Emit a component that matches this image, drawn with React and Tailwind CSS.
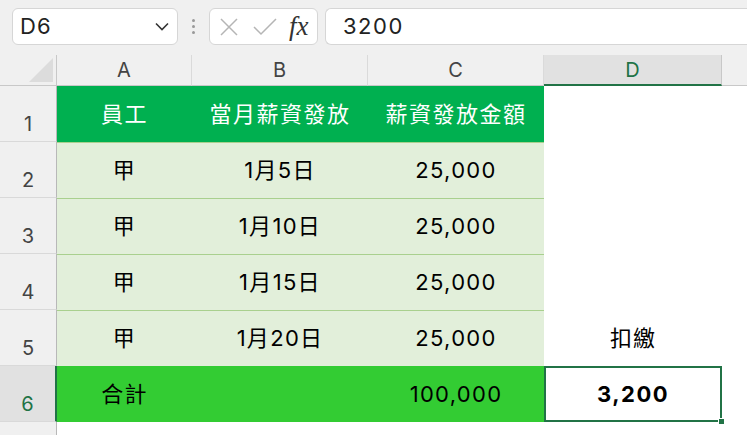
import React from 'react'

const font = { fontFamily: 'Inter, "Noto Sans CJK TC", sans-serif' }

const cols = ['A', 'B', 'C', 'D']

const rows = [
  { n: 1, cells: ['員工', '當月薪資發放', '薪資發放金額', ''], kind: 'head' },
  { n: 2, cells: ['甲', '1月5日', '25,000', ''], kind: 'data' },
  { n: 3, cells: ['甲', '1月10日', '25,000', ''], kind: 'data' },
  { n: 4, cells: ['甲', '1月15日', '25,000', ''], kind: 'data' },
  { n: 5, cells: ['甲', '1月20日', '25,000', '扣繳'], kind: 'data' },
  { n: 6, cells: ['合計', '', '100,000', '3,200'], kind: 'total' },
]

function RowHeader({ n, active }) {
  return (
    <div
      className={
        'flex items-end justify-center pb-[2px] text-[20px] border-b border-[#d9d9d9] ' +
        (active
          ? 'bg-[#e1e1e1] text-[#217346] border-r-2 border-r-[#217346]'
          : 'bg-[#f0f0f0] text-[#444] border-r border-r-[#b8b8b8]')
      }
    >
      {n}
    </div>
  )
}

function Cell({ text, kind, col }) {
  if (col === 3) {
    if (kind === 'total') {
      return (
        <div className="relative flex items-center justify-center bg-white border-2 border-[#217346] text-[22px] tracking-[1.5px] font-bold text-black">
          {text}
          <div className="absolute right-[-5px] bottom-[-5px] w-[7px] h-[7px] bg-[#217346] border border-white" />
        </div>
      )
    }
    return <div className="flex items-center justify-center bg-white text-[22px] tracking-[1px] text-black">{text}</div>
  }
  if (kind === 'head') {
    return <div className="flex items-center justify-center bg-[#00b050] text-white text-[22px] tracking-[1.5px]">{text}</div>
  }
  if (kind === 'total') {
    return <div className="flex items-center justify-center bg-[#33cc33] text-black text-[22px] tracking-[1.3px]">{text}</div>
  }
  return (
    <div className="flex items-center justify-center bg-[#e2efda] border-t border-[#a9d08e] text-black text-[22px] tracking-[1.3px]">
      {text}
    </div>
  )
}

export default function App() {
  return (
    <div className="w-[747px] h-[435px] overflow-hidden bg-[#f0f0f0]" style={font}>
      {/* formula bar */}
      <div className="flex items-center h-[52px] pl-[12px] pt-[1px]">
        <div className="flex items-center justify-between w-[166px] h-[37px] bg-white border border-[#d6d6d6] rounded-[6px] pl-[7px] pr-[8px]">
          <span className="text-[22px] tracking-[1px] text-[#222]">D6</span>
          <svg width="14" height="9" viewBox="0 0 14 9" fill="none" stroke="#333" strokeWidth="1.6">
            <path d="M1 1.5 L7 7.5 L13 1.5" />
          </svg>
        </div>
        <div className="flex flex-col gap-[3px] w-[31px] items-center">
          <div className="w-[3px] h-[3px] bg-[#999] rounded-full" />
          <div className="w-[3px] h-[3px] bg-[#999] rounded-full" />
          <div className="w-[3px] h-[3px] bg-[#999] rounded-full" />
        </div>
        <div className="flex items-center w-[109px] h-[37px] bg-white border border-[#d6d6d6] rounded-[6px] pl-[10px]">
          <svg width="18" height="18" viewBox="0 0 18 18" stroke="#b5b5b5" strokeWidth="1.5">
            <path d="M1 1 L17 17 M17 1 L1 17" />
          </svg>
          <svg className="ml-[15px]" width="24" height="18" viewBox="0 0 24 18" fill="none" stroke="#b5b5b5" strokeWidth="1.5">
            <path d="M1 9 L8 16 L23 1" />
          </svg>
          <span
            className="ml-[12px] text-[27px] leading-none italic text-[#333]"
            style={{ fontFamily: '"Liberation Serif", serif' }}
          >
            fx
          </span>
        </div>
        <div className="flex items-center flex-1 h-[37px] ml-[7px] bg-white border border-[#d6d6d6] border-r-0 rounded-l-[6px] pl-[17px]">
          <span className="text-[22px] tracking-[1.5px] text-[#222]">3200</span>
        </div>
      </div>

      {/* sheet */}
      <div className="grid grid-cols-[57px_135px_176px_176px_178px_1fr] grid-rows-[31px_56px_56px_56px_56px_56px_56px_1fr] h-[383px] mt-[3px]">
        {/* column headers */}
        <div className="flex items-end justify-end border-r border-b border-[#c8c8c8] pb-[3px] pr-[3px]">
          <svg width="24" height="24" viewBox="0 0 24 24">
            <path d="M24 0 L24 24 L0 24 Z" fill="#dcdcdc" />
          </svg>
        </div>
        {cols.map((c, i) =>
          i === 3 ? (
            <div
              key={c}
              className="flex items-center justify-center bg-[#e1e1e1] text-[#217346] text-[20px] border-b-2 border-[#217346] border-r border-r-[#c8c8c8]"
            >
              {c}
            </div>
          ) : (
            <div
              key={c}
              className="flex items-center justify-center text-[#444] text-[20px] border-b border-[#c8c8c8] border-r border-r-[#dadada]"
            >
              {c}
            </div>
          )
        )}
        <div className="border-b border-[#c8c8c8]" />

        {rows.map((r) => (
          <React.Fragment key={r.n}>
            <RowHeader n={r.n} active={r.n === 6} />
            {r.cells.map((t, i) => (
              <Cell key={i} text={t} kind={r.kind} col={i} />
            ))}
            <div className="bg-white" />
          </React.Fragment>
        ))}

        <div className="bg-[#f0f0f0] border-r border-[#b8b8b8]" />
        <div className="col-span-5 bg-white" />
      </div>
    </div>
  )
}
